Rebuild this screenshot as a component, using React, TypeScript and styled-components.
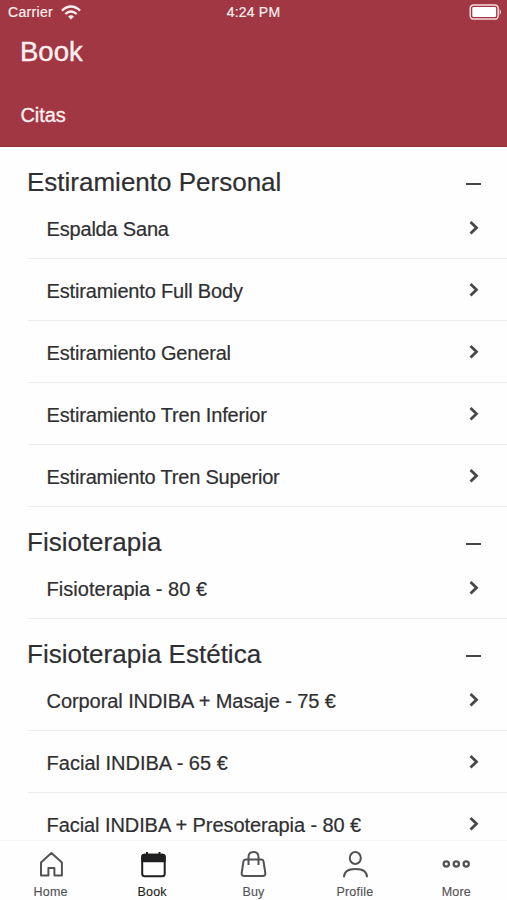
import React from 'react';
import styled, { createGlobalStyle } from 'styled-components';

const GlobalStyle = createGlobalStyle`
  * { box-sizing: border-box; }
  html, body { margin: 0; padding: 0; background: #fefefe; }
  body { font-family: "Liberation Sans", Arial, sans-serif; overflow: hidden; }
`;

const Screen = styled.div`
  display: flex;
  flex-direction: column;
  width: 507px;
  height: 900px;
  overflow: hidden;
  background: #fefefe;
  color: #2f2f31;
`;

const Header = styled.header`
  flex: none;
  height: 147px;
  background: #a03743;
  border-bottom: 1px solid #8a3440;
  color: #fdf0f0;
`;

const StatusBar = styled.div`
  display: grid;
  grid-template-columns: 1fr auto 1fr;
  align-items: center;
  height: 24px;
  padding: 0 5px 0 8px;
  font-size: 14px;
  line-height: 24px;
  -webkit-text-stroke: 0.2px currentColor;
`;

const Carrier = styled.div`
  display: flex;
  align-items: center;
  gap: 8px;
  letter-spacing: 0.32px;
`;

const Clock = styled.div`
  margin-right: 3px;
  letter-spacing: 0.2px;
`;

const BatterySlot = styled.div`
  display: flex;
  justify-content: flex-end;
`;

const Title = styled.h1`
  margin: 12px 0 0 20px;
  font-size: 27.5px;
  line-height: 32px;
  font-weight: 400;
  -webkit-text-stroke: 0.4px currentColor;
`;

const Tab = styled.div`
  margin: 35px 0 0 20.5px;
  font-size: 20px;
  line-height: 24px;
  letter-spacing: -0.1px;
  -webkit-text-stroke: 0.3px currentColor;
`;

const Content = styled.main`
  flex: 1;
  min-height: 0;
  overflow: hidden;
  -webkit-text-stroke: 0.2px currentColor;
`;

const SectionHeading = styled.div`
  display: flex;
  align-items: center;
  justify-content: space-between;
  height: 50px;
  padding: 20px 26px 0 27px;
`;

const SectionTitle = styled.h2`
  margin: 0;
  font-size: 26px;
  line-height: 30px;
  font-weight: 400;
  white-space: nowrap;
`;

const Collapse = styled.span`
  width: 15px;
  height: 2px;
  margin-top: 3px;
  background: #48484a;
`;

const Row = styled.div`
  display: flex;
  align-items: center;
  justify-content: space-between;
  height: 62px;
  margin-left: 28px;
  padding: 3px 28px 0 18.6px;
  border-bottom: 1px solid #ebebec;
`;

const RowLabel = styled.span<{ $tracking: number }>`
  font-size: 20px;
  line-height: 24px;
  white-space: nowrap;
  letter-spacing: ${(p) => p.$tracking}px;
`;

const Chevron = styled.svg`
  width: 10px;
  height: 16px;
  margin-top: -3px;
`;

const TabBar = styled.nav`
  flex: none;
  display: grid;
  grid-template-columns: repeat(5, 1fr);
  height: 60px;
  border-top: 1px solid #f5f5f6;
  background: #fefefe;
`;

const TabItem = styled.div<{ $active?: boolean }>`
  display: flex;
  flex-direction: column;
  align-items: center;
  padding-top: 8px;
  color: ${(p) => (p.$active ? '#1f1f22' : '#535356')};
  font-size: 12.5px;
  line-height: 16px;
  letter-spacing: 0.2px;
  -webkit-text-stroke: 0.15px currentColor;
  svg { width: 30px; height: 30px; margin-bottom: 5px; }
`;

const stroke = {
  fill: 'none',
  stroke: 'currentColor',
  strokeWidth: 2,
  strokeLinejoin: 'round' as const,
};

const HomeIcon = () => (
  <svg viewBox="0 0 30 30" {...stroke}>
    <path d="M15.4 4 5 13.5V26.5H12.4V19H18.4V26.5H25.9V13.5Z" />
  </svg>
);

const CalendarIcon = () => (
  <svg viewBox="0 0 30 30" {...stroke}>
    <rect x="5.2" y="5.8" width="22.5" height="21.4" rx="2.5" />
    <path d="M7.2 5.8H25.7Q27.7 5.8 27.7 7.8V12.2H5.2V7.8Q5.2 5.8 7.2 5.8Z" fill="currentColor" />
    <path d="M10 3v5M22.5 3v5" />
  </svg>
);

const BagIcon = () => (
  <svg viewBox="0 0 30 30" {...stroke}>
    <path d="M7.5 10.5H23.5Q25.2 10.5 25.5 12.2L27.3 24Q27.5 27 24.8 27H6.2Q3.5 27 3.7 24L5.5 12.2Q5.8 10.5 7.5 10.5Z" />
    <path d="M10.5 16V8.2Q10.5 3 15.5 3T20.5 8.2V16" />
  </svg>
);

const ProfileIcon = () => (
  <svg viewBox="0 0 30 30" {...stroke}>
    <ellipse cx="15.3" cy="9" rx="5.5" ry="6" />
    <path d="M4 28.3C4 22.5 9 20 15.5 20S27 22.5 27 28.3" />
  </svg>
);

const MoreIcon = () => (
  <svg viewBox="0 0 30 30" {...stroke} strokeWidth={2.3}>
    <circle cx="5.3" cy="15" r="2.6" />
    <circle cx="15.3" cy="15" r="2.6" />
    <circle cx="25.2" cy="15" r="2.6" />
  </svg>
);

const WifiIcon = () => (
  <svg width="20" height="15" viewBox="0 0 20 15" fill="none" stroke="currentColor" strokeWidth="2.3">
    <path d="M.9 5.6Q10-2.6 19.1 5.6M4.3 9Q10 4 15.7 9" />
    <path d="M7 11.5Q10 9 13 11.5L10 14.6Z" fill="currentColor" stroke="none" />
  </svg>
);

const BatteryIcon = () => (
  <svg width="33" height="16" viewBox="0 0 33 16">
    <rect x="1.2" y=".9" width="28" height="14.2" rx="3.4" fill="none" stroke="#f8dcdc" strokeWidth="1.5" />
    <rect x="3.3" y="3" width="23.8" height="10" rx="1.2" fill="#fff" />
    <path d="M30.6 5Q33.4 8 30.6 11Z" fill="#f8dcdc" />
  </svg>
);

type Entry = { name: string; tracking: number };

const sections: { title: string; items: Entry[] }[] = [
  {
    title: 'Estiramiento Personal',
    items: [
      { name: 'Espalda Sana', tracking: -0.2 },
      { name: 'Estiramiento Full Body', tracking: -0.18 },
      { name: 'Estiramiento General', tracking: -0.18 },
      { name: 'Estiramiento Tren Inferior', tracking: -0.17 },
      { name: 'Estiramiento Tren Superior', tracking: -0.19 },
    ],
  },
  { title: 'Fisioterapia', items: [{ name: 'Fisioterapia - 80 €', tracking: 0.02 }] },
  {
    title: 'Fisioterapia Estética',
    items: [
      { name: 'Corporal INDIBA + Masaje - 75 €', tracking: -0.08 },
      { name: 'Facial INDIBA - 65 €', tracking: 0 },
      { name: 'Facial INDIBA + Presoterapia - 80 €', tracking: -0.08 },
    ],
  },
];

const tabs = [
  { label: 'Home', Icon: HomeIcon },
  { label: 'Book', Icon: CalendarIcon, active: true },
  { label: 'Buy', Icon: BagIcon },
  { label: 'Profile', Icon: ProfileIcon },
  { label: 'More', Icon: MoreIcon },
];

export default function App() {
  return (
    <Screen>
      <GlobalStyle />
      <Header>
        <StatusBar>
          <Carrier>Carrier <WifiIcon /></Carrier>
          <Clock>4:24 PM</Clock>
          <BatterySlot><BatteryIcon /></BatterySlot>
        </StatusBar>
        <Title>Book</Title>
        <Tab>Citas</Tab>
      </Header>
      <Content>
        {sections.map((section) => (
          <section key={section.title}>
            <SectionHeading>
              <SectionTitle>{section.title}</SectionTitle>
              <Collapse />
            </SectionHeading>
            {section.items.map((item) => (
              <Row key={item.name}>
                <RowLabel $tracking={item.tracking}>{item.name}</RowLabel>
                <Chevron viewBox="0 0 10 16" fill="none" stroke="#48484a" strokeWidth="2.8">
                  <path d="M1.5 2 7.5 7.8 1.5 13.6" />
                </Chevron>
              </Row>
            ))}
          </section>
        ))}
      </Content>
      <TabBar>
        {tabs.map(({ label, Icon, active }) => (
          <TabItem key={label} $active={active}>
            <Icon />
            {label}
          </TabItem>
        ))}
      </TabBar>
    </Screen>
  );
}
